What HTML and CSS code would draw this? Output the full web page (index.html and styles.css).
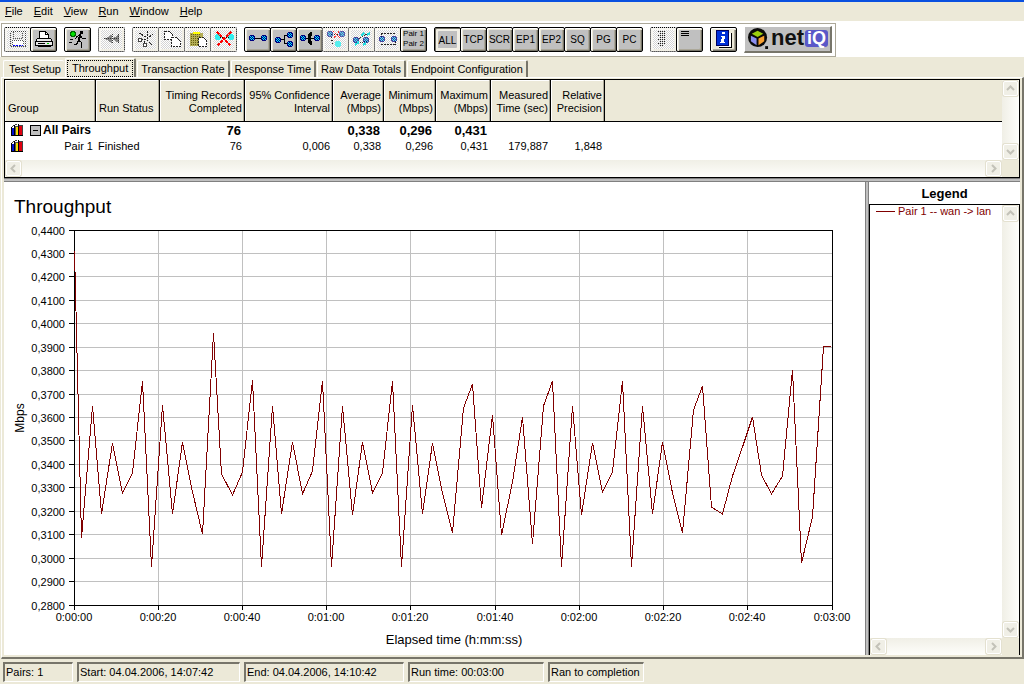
FILE: index.html
```html
<!DOCTYPE html>
<html lang="en">
<head>
<meta charset="utf-8">
<title>Throughput</title>
<link rel="stylesheet" href="styles.css">
</head>
<body>
<svg class="defs" aria-hidden="true">
  <symbol id="bars" viewBox="0 0 12 12"><path d="M0 3h1v9H0zM3 1h1v11H3zM7 0h1v12H7zM0 11h12v1H0z" fill="#000"/><path d="M1 4h2v7H1z" fill="#0010d0"/><path d="M4 2h3v9H4z" fill="#555"/><path d="M5 3h2v8H5z" fill="#f4e000"/><path d="M8 2h3v9H8z" fill="#e00010"/><path d="M1 3l2-2M4 1l2-1M8 1h3v1M11 2v9" stroke="#444" fill="none"/></symbol>
  <symbol id="node" viewBox="0 0 6 6"><path d="M1 0h4v1h1v4H5v1H1V5H0V1h1z" fill="#000080"/><path d="M1 1h1v1H1zM3 1h1v1H3zM2 2h1v1H2zM4 2h1v1H4zM1 3h1v1H1zM3 3h1v1H3zM2 4h1v1H2zM4 4h1v1H4z" fill="#00e8ff"/></symbol>
  <symbol id="up" viewBox="0 0 9 9"><path d="M1 6l3.500-3.500L8 6" fill="none" stroke="#c3c2b8" stroke-width="2"/></symbol>
  <symbol id="down" viewBox="0 0 9 9"><path d="M1 3l3.500 3.500L8 3" fill="none" stroke="#c3c2b8" stroke-width="2"/></symbol>
  <symbol id="left" viewBox="0 0 9 9"><path d="M6 1L2.500 4.500 6 8" fill="none" stroke="#c3c2b8" stroke-width="2"/></symbol>
  <symbol id="right" viewBox="0 0 9 9"><path d="M3 1l3.500 3.500L3 8" fill="none" stroke="#c3c2b8" stroke-width="2"/></symbol>
</svg>

<nav class="menu">
  <button><u>F</u>ile</button><button><u>E</u>dit</button><button><u>V</u>iew</button><button><u>R</u>un</button><button><u>W</u>indow</button><button><u>H</u>elp</button>
</nav>

<div class="toolbar-band">
  <div class="toolbar">
    <div class="group">
      <button class="tool off" aria-label="Save" disabled><svg viewBox="0 0 20 18"><path d="M2.500 1.500h15v15h-15z" fill="none" stroke="#444" stroke-dasharray="1 1"/><path d="M5.500 2v6.500h9V2" fill="none" stroke="#555" stroke-dasharray="1 1"/><path d="M5 10h10v5H5z" fill="#fff"/><path d="M4.500 15V10.500h11V15" fill="none" stroke="#555" stroke-dasharray="1 1"/><path d="M5 15.500h10" stroke="#00f" stroke-dasharray="2 1"/></svg></button>
      <button class="tool" aria-label="Print"><svg viewBox="0 0 20 18"><path d="M5.500 8.500V1.500h6l3 3v4" fill="#fff" stroke="#000"/><path d="M11.500 1.500v3h3" fill="none" stroke="#000"/><path d="M3.500 8.500h13l2 3v4h-17v-4z" fill="#e8e8e8" stroke="#000"/><path d="M2 11.500h16M4 13.500h7M4 16.500h13" stroke="#000"/><path d="M13 13h2v1h-2z" fill="#0c0"/></svg></button>
    </div>
    <div class="group">
      <button class="tool" aria-label="Run"><svg viewBox="0 0 20 18"><path d="M3 1h3v1h1v3H6v1H3V5H2V2h1z" fill="#00e000" stroke="#060"/><path d="M12 1h3v3h-3z" fill="#000"/><path d="M12.500 4.500L10.500 10.500" fill="none" stroke="#000" stroke-width="2"/><path d="M10.500 10.500L13.500 12.500V17.500M10.500 10.500L8.500 14.500H5.500M12 5.500L8.500 6.500 7.500 9.500M13 6.500L14.500 8.500H17.500" fill="none" stroke="#000"/><path d="M2 9.500h3M1 12.500h3" stroke="#000"/></svg></button>
    </div>
    <div class="group">
      <button class="tool off" aria-label="Stop" disabled><svg viewBox="0 0 20 18"><path d="M3 8.500l7-4v9zM10 8.500l7-4v9z" fill="#888"/><path d="M2 8.500h16M10 4v9M16 4v9" stroke="#333" stroke-dasharray="1 1"/></svg></button>
    </div>
    <div class="group">
      <button class="tool off" aria-label="Cut" disabled><svg viewBox="0 0 20 18"><path d="M11.500 1v7L3 3M11 9l6-5M10 9H5M11 10l5 5M9 11l-1 4" fill="none" stroke="#222" stroke-dasharray="2 1"/><circle cx="4" cy="10" r="2" fill="#fff" stroke="#444"/><circle cx="9" cy="15" r="2" fill="#fff" stroke="#444"/></svg></button>
      <button class="tool off" aria-label="Copy" disabled><svg viewBox="0 0 20 18"><path d="M2.500 1.500h5l3 3v5h-8z" fill="#fff" stroke="#222" stroke-dasharray="2 1"/><path d="M9.500 7.500h5l4 4v5h-9z" fill="#fff" stroke="#222" stroke-dasharray="2 1"/></svg></button>
      <button class="tool off" aria-label="Paste" disabled><svg viewBox="0 0 20 18"><path d="M2 3h13v13H2z" fill="#b3ad55"/><path d="M3 4h9M3 6h9M3 8h7M3 10h7M3 12h7M3 14h7" stroke="#665f10" stroke-dasharray="1 1"/><path d="M5 2h7v2H5z" fill="#ff0"/><path d="M10.500 7.500h5l3 3v6h-8z" fill="#fff" stroke="#222" stroke-dasharray="2 1"/></svg></button>
      <button class="tool off" aria-label="Delete" disabled><svg viewBox="0 0 20 18"><circle cx="4" cy="7" r="3" fill="#3ee"/><circle cx="17" cy="7" r="3" fill="#3ee"/><path d="M6 7.500h9" stroke="#000" stroke-dasharray="1 1"/><path d="M3 2l14 14M17 2L3 16" stroke="#f00" stroke-width="2" stroke-dasharray="3 1"/></svg></button>
    </div>
    <div class="group">
      <button class="tool" aria-label="Add pair"><svg viewBox="0 0 20 18"><path d="M6 8.500h8" stroke="#000"/><use href="#node" x="1" y="5" width="6" height="6"/><use href="#node" x="13" y="5" width="6" height="6"/></svg></button>
      <button class="tool" aria-label="Add multicast group"><svg viewBox="0 0 20 18"><path d="M6 9.500h4M14 5.500h-4v8h4" fill="none" stroke="#000"/><use href="#node" x="1" y="7" width="6" height="6"/><use href="#node" x="13" y="2" width="6" height="6"/><use href="#node" x="13" y="11" width="6" height="6"/></svg></button>
      <button class="tool" aria-label="Add VoIP pair"><svg viewBox="0 0 20 18"><path d="M6 8.500h8" stroke="#000"/><use href="#node" x="0" y="5" width="6" height="6"/><use href="#node" x="14" y="5" width="6" height="6"/><path d="M10 2h2v4h-1v5h1v4h-2l-2-2V4z" fill="#000"/></svg></button>
      <button class="tool off" aria-label="Replicate" disabled><svg viewBox="0 0 20 18"><path d="M5 4.500h10M5 7l2 7h6" fill="none" stroke="#222" stroke-dasharray="1 2"/><use href="#node" x="1" y="1" width="6" height="6" opacity=".6"/><use href="#node" x="13" y="1" width="6" height="6" opacity=".6"/><path d="M7 1l7 7M13 1L8 8" stroke="#f33" stroke-dasharray="2 1"/><circle cx="12" cy="14" r="3" fill="#5ee"/></svg></button>
      <button class="tool off" aria-label="Edit pair" disabled><svg viewBox="0 0 20 18"><path d="M5 10L17 3M6 13l10-2" stroke="#333" stroke-dasharray="1 1"/><use href="#node" x="1" y="7" width="6" height="6" opacity=".7"/><use href="#node" x="11" y="7" width="6" height="6" opacity=".7"/><path d="M3 15l4-3M9 6l3-3M11 15l3-2M15 5l3-2" stroke="#2dd" stroke-width="2"/></svg></button>
      <button class="tool off" aria-label="Swap endpoints" disabled><svg viewBox="0 0 20 18"><path d="M3 3.500h14M3 14.500h14M3 3v4M17 11v4" fill="none" stroke="#222" stroke-dasharray="2 1"/><use href="#node" x="1" y="6" width="6" height="6" opacity=".7"/><use href="#node" x="13" y="6" width="6" height="6" opacity=".7"/></svg></button>
      <button class="tool pairs">Pair 1<br>Pair 2</button>
    </div>
    <div class="group">
      <button class="tool pressed">ALL</button><button class="tool">TCP</button><button class="tool">SCR</button><button class="tool">EP1</button><button class="tool">EP2</button><button class="tool">SQ</button><button class="tool">PG</button><button class="tool">PC</button>
    </div>
    <div class="group">
      <button class="tool off" aria-label="Show details" disabled><svg viewBox="0 0 20 18"><path d="M4 1.500h8M6 3.500h6M4 5.500h8M6 7.500h6M4 9.500h8M6 11.500h6M4 13.500h8M6 15.500h4" stroke="#222" stroke-dasharray="1 1"/></svg></button>
      <button class="tool" aria-label="Show summary"><svg viewBox="0 0 20 18"><path d="M1 1.500h8M1 3.500h8M1 5.500h8" stroke="#000"/></svg></button>
    </div>
    <div class="group">
      <button class="tool light" aria-label="Information"><svg viewBox="0 0 20 18"><path d="M5 3h13v15H5z" fill="#000"/><path d="M5 3h12v14H5z" fill="#fff"/><path d="M2.500.5h12v15h-12z" fill="#0030d8" stroke="#000060"/><path d="M8 2h3v2H8zM7 6h3v1H7zM8 6h3l-1 6H7zM6 12h5v1H6z" fill="#fff"/></svg></button>
    </div>
    <a class="logo" href="#" aria-label="netiQ">
      <svg viewBox="0 0 22 22"><circle cx="10" cy="10" r="10" fill="#0a0a0a"/><path d="M10 3l6 3-6 3.500L4 6z" fill="#9ccf10"/><path d="M3 8l6 3v7l-6-4z" fill="#8b8ff0"/><path d="M17 8l-6 3v7l6-4z" fill="#f9a030"/><path d="M18 19h3v3h-3z" fill="#0a0a0a"/></svg>
      <span class="net">net</span><span class="iq">iQ</span>
    </a>
  </div>
</div>

<div class="tabs" role="tablist">
  <button class="tab" role="tab">Test Setup</button>
  <button class="tab current" role="tab" aria-selected="true"><span>Throughput</span></button>
  <button class="tab" role="tab">Transaction Rate</button>
  <button class="tab" role="tab">Response Time</button>
  <button class="tab" role="tab">Raw Data Totals</button>
  <button class="tab" role="tab">Endpoint Configuration</button>
</div>

<main class="panel">
  <section class="results">
    <div class="results-body">
      <table>
        <colgroup><col class="c-group"><col class="c-status"><col class="c-records"><col class="c-conf"><col class="c-avg"><col class="c-min"><col class="c-max"><col class="c-time"><col class="c-prec"><col></colgroup>
        <thead><tr><th class="l">Group</th><th class="l">Run Status</th><th>Timing Records<br>Completed</th><th>95% Confidence<br>Interval</th><th>Average<br>(Mbps)</th><th>Minimum<br>(Mbps)</th><th>Maximum<br>(Mbps)</th><th>Measured<br>Time (sec)</th><th>Relative<br>Precision</th><th class="rest"></th></tr></thead>
        <tbody>
          <tr class="total"><td class="l"><div class="cell"><svg class="bars"><use href="#bars"/></svg><button class="fold" aria-label="Collapse"></button><span>All Pairs</span></div></td><td></td><td>76</td><td></td><td>0,338</td><td>0,296</td><td>0,431</td><td></td><td></td><td></td></tr>
          <tr><td class="l"><div class="cell child"><svg class="bars"><use href="#bars"/></svg><span>Pair 1</span></div></td><td class="l">Finished</td><td>76</td><td>0,006</td><td>0,338</td><td>0,296</td><td>0,431</td><td>179,887</td><td>1,848</td><td></td></tr>
        </tbody>
      </table>
      <div class="vbar"><button aria-label="Scroll up"><svg><use href="#up"/></svg></button><button aria-label="Scroll down"><svg><use href="#down"/></svg></button></div>
    </div>
    <div class="hbar"><button aria-label="Scroll left"><svg><use href="#left"/></svg></button><button aria-label="Scroll right"><svg><use href="#right"/></svg></button></div>
  </section>
  <div class="split-h"></div>
  <div class="lower">
    <section class="chart">
      <svg viewBox="4 182 861 473" preserveAspectRatio="xMinYMin meet" role="img" aria-label="Throughput over elapsed time">
        <text class="title" x="14" y="213">Throughput</text>
        <path class="grid" d="M75 253.500h757M75 276.500h757M75 300.500h757M75 323.500h757M75 347.500h757M75 370.500h757M75 394.500h757M75 417.500h757M75 440.500h757M75 464.500h757M75 487.500h757M75 511.500h757M75 534.500h757M75 558.500h757M75 581.500h757"/>
        <path class="grid" d="M158.500 231v374M242.500 231v374M326.500 231v374M410.500 231v374M495.500 231v374M579.500 231v374M663.500 231v374M747.500 231v374"/>
        <path class="axis" d="M74.500 230.500h758v375h-758z"/>
        <path class="axis" d="M69 230.500h5M69 253.500h5M69 276.500h5M69 300.500h5M69 323.500h5M69 347.500h5M69 370.500h5M69 394.500h5M69 417.500h5M69 440.500h5M69 464.500h5M69 487.500h5M69 511.500h5M69 534.500h5M69 558.500h5M69 581.500h5M69 605.500h5"/>
        <path class="axis" d="M74.500 606v4M158.500 606v4M242.500 606v4M326.500 606v4M410.500 606v4M495.500 606v4M579.500 606v4M663.500 606v4M747.500 606v4M832.500 606v4"/>
        <g class="ylab">
          <text x="65" y="235">0,4400</text><text x="65" y="258">0,4300</text><text x="65" y="281">0,4200</text><text x="65" y="305">0,4100</text><text x="65" y="328">0,4000</text><text x="65" y="352">0,3900</text><text x="65" y="375">0,3800</text><text x="65" y="399">0,3700</text><text x="65" y="422">0,3600</text><text x="65" y="445">0,3500</text><text x="65" y="469">0,3400</text><text x="65" y="492">0,3300</text><text x="65" y="516">0,3200</text><text x="65" y="539">0,3100</text><text x="65" y="563">0,3000</text><text x="65" y="586">0,2900</text><text x="65" y="610">0,2800</text>
        </g>
        <g class="xlab">
          <text x="74" y="621">0:00:00</text><text x="158" y="621">0:00:20</text><text x="242" y="621">0:00:40</text><text x="326" y="621">0:01:00</text><text x="410" y="621">0:01:20</text><text x="495" y="621">0:01:40</text><text x="579" y="621">0:02:00</text><text x="663" y="621">0:02:20</text><text x="747" y="621">0:02:40</text><text x="832" y="621">0:03:00</text>
          <text class="ytitle" transform="translate(24 418) rotate(-90)">Mbps</text>
        </g>
        <text class="xtitle" x="454" y="644">Elapsed time (h:mm:ss)</text>
        <polyline class="series" points="74.5,251 75.500,290 81.5,538 92.5,406 101.5,514 112.5,443 122.5,493 132.5,473 142.5,381 151.5,567 162.5,405 172.5,514 182.5,442 192.5,492 202.5,534 213.5,333 221.5,474 232.5,495 242.5,472 252.5,380 261.5,567 272.5,406 281.5,514 292.5,442 302.5,494 312.5,471 322.5,381 331.5,567 342.5,406 352.5,515 362.5,442 372.5,493 382.5,473 392.5,381 401.5,567 412.5,405 422.5,514 432.5,443 442.5,493 452.5,533 463.5,408 472.5,384 481.5,508 492.5,415 501.5,535 512.5,482 522.5,417 532.5,544 543.5,406 552.5,381 561.5,567 572.5,406 581.5,515 592.5,443 602.5,492 612.5,472 622.5,381 631.5,567 642.5,406 652.5,514 662.5,442 672.5,493 682.5,533 693.5,410 702.5,386 711.5,507 722.5,514 732.5,476 742.5,447 752.5,417 761.5,475 771.5,494 782.5,476 792.5,370 801.5,563 812.5,517 823.5,346.5 831,346.5"/>
        <path class="axis" d="M74.500 272v60"/>
      </svg>
    </section>
    <div class="split-v"></div>
    <aside class="legend">
      <h2>Legend</h2>
      <div class="legend-box">
        <div class="legend-body">
          <div class="legend-list"><div class="key"><i></i>Pair 1 -- wan -&gt; lan</div></div>
          <div class="vbar"><button aria-label="Scroll up"><svg><use href="#up"/></svg></button><button aria-label="Scroll down"><svg><use href="#down"/></svg></button></div>
        </div>
        <div class="hbar"><button aria-label="Scroll left"><svg><use href="#left"/></svg></button><button aria-label="Scroll right"><svg><use href="#right"/></svg></button></div>
      </div>
    </aside>
  </div>
</main>

<footer class="status">
  <span class="s-pairs">Pairs: 1</span><span class="s-start">Start: 04.04.2006, 14:07:42</span><span class="s-end">End: 04.04.2006, 14:10:42</span><span class="s-run">Run time: 00:03:00</span><span class="s-done">Ran to completion</span>
</footer>
</body>
</html>
```

FILE: styles.css
```css
* { box-sizing: border-box; }
body {
  margin: 0;
  min-height: 100vh;
  display: flex;
  flex-direction: column;
  background: #ece9d8;
  color: #000;
  font: 11px/13px "Liberation Sans", Arial, sans-serif;
  border-top: 2px solid #0a50e0;
}
button {
  font: inherit;
  color: inherit;
  background: none;
  border: 0;
  padding: 0;
  margin: 0;
}
.defs { display: none; }

.menu { display: flex; gap: 11px; padding: 3px 5px; }

.toolbar-band { background: #fff; padding: 1px 0 0 1px; border-top: 1px solid #fff; }
.toolbar {
  display: inline-flex;
  vertical-align: top;
  align-items: center;
  gap: 7px;
  height: 34px;
  padding: 0 3px 2px 2px;
  border: 1px solid #aca899;
}
.group { display: flex; }
.tool {
  width: 27px;
  height: 25px;
  display: flex;
  align-items: center;
  justify-content: center;
  white-space: nowrap;
  font-size: 10px;
  background: #c0c0c0;
  border: 1px solid #000;
  border-radius: 2px;
  box-shadow: inset 1px 1px #fff, inset 2px 2px #ece9d8, inset -1px -1px #77756a, inset -2px -2px #aca899;
}
.tool + .tool { margin-left: -1px; }
.tool svg { width: 20px; height: 18px; flex: none; shape-rendering: crispEdges; }
.tool.off {
  border-style: dotted;
  background: repeating-conic-gradient(#d4d4d4 0 25%, #fff 0 50%) 0 0 / 2px 2px;
  box-shadow: inset 2px 2px #f8f7f2, inset -2px -2px #f1efe5;
}
.tool.pressed { box-shadow: inset 1px 1px #77756a, inset 3px 3px #f1efe5, inset -3px -3px #f1efe5; padding-top: 2px; }
.tool.light { background: #ece9d8; }
.tool.pairs { font-size: 8px; line-height: 10px; }
.logo {
  width: 88px;
  height: 27px;
  display: flex;
  align-items: center;
  padding-left: 3px;
  background: #c0c0c0;
  border: 1px solid #fff;
  border-right: 2px solid #77756a;
  border-bottom: 2px solid #77756a;
  color: #111;
  text-decoration: none;
}
.logo svg { width: 21px; height: 21px; flex: none; }
.net { font-weight: bold; font-size: 22px; line-height: 20px; margin: 0 1px 2px 2px; }
.iq {
  background: #5a58c8;
  color: #fff;
  font-weight: bold;
  font-size: 18px;
  line-height: 17px;
  border-radius: 3px;
  width: 23px;
  text-align: center;
}

.tabs { display: flex; align-items: flex-end; gap: 1px; padding: 1px 3px 0; height: 20px; }
.tab {
  height: 17px;
  padding: 1px 3px 0;
  border-left: 1px solid #fff;
  border-top: 1px solid #fff;
  border-right: 2px solid #77756a;
  border-radius: 2px 2px 0 0;
  white-space: nowrap;
}
.tab:first-child { padding-left: 5px; border-right: 0; }
.tab.current { height: 19px; padding: 0 1px; }
.tab.current span { display: block; height: 17px; padding: 1px 4px 0; border: 1px dotted #000; }

.panel {
  flex: 1;
  display: flex;
  flex-direction: column;
  margin-left: 1px;
  padding: 1px 2px 2px;
  border-top: 1px solid #fff;
  border-left: 1px solid #fff;
  border-right: 2px solid #77756a;
  border-bottom: 2px solid #77756a;
}
.results { border: 1px solid #000; background: #fff; }
.results-body { display: flex; }
table { flex: 1; width: 0; border-collapse: separate; border-spacing: 0; table-layout: fixed; margin-bottom: 6px; }
.c-group { width: 91px; } .c-status { width: 64px; } .c-records { width: 85px; }
.c-conf { width: 88px; } .c-avg { width: 51px; } .c-min { width: 52px; }
.c-max { width: 55px; } .c-time { width: 60px; } .c-prec { width: 54px; }
th {
  height: 42px;
  padding: 0 2px 6px 0;
  vertical-align: bottom;
  text-align: right;
  font-weight: normal;
  white-space: nowrap;
  background: #ece9d8;
  border-right: 1px solid #000;
  border-bottom: 1px solid #000;
  box-shadow: inset -1px 0 #aca899, inset 1px 1px #fff;
}
th.l { text-align: left; padding-left: 3px; }
th.rest { border-right: 0; box-shadow: none; }
td { height: 16px; padding: 0 3px 0 2px; text-align: right; white-space: nowrap; }
td.l { text-align: left; }
.total { font-weight: bold; font-size: 13px; }
.total .cell { font-size: 12px; }
.total td { padding-right: 4px; }
.cell { display: flex; align-items: center; padding-left: 4px; }
.bars { width: 12px; height: 12px; shape-rendering: crispEdges; }
.fold {
  width: 11px;
  height: 11px;
  margin: 0 2px 0 7px;
  border: 1px solid #000;
  background: linear-gradient(#000, #000) center / 5px 1px no-repeat, #c0c0c0;
}
.child { justify-content: space-between; }

.vbar {
  width: 17px;
  display: flex;
  flex-direction: column;
  justify-content: space-between;
  background: linear-gradient(90deg, #f0efe6, #fefefb);
}
.hbar {
  height: 17px;
  margin-right: 17px;
  display: flex;
  justify-content: space-between;
  background: linear-gradient(#f0efe6, #fefefb);
  box-shadow: 17px 0 #ece9d8;
}
.vbar button, .hbar button {
  width: 15px;
  height: 15px;
  margin: 1px;
  display: grid;
  place-items: center;
  background: #f0efe6;
  border: 1px solid #fff;
  border-radius: 2px;
  box-shadow: 0 0 0 1px #e4e1d0;
}
.vbar svg, .hbar svg { width: 9px; height: 9px; }

.split-h { height: 4px; background: #c0c0c0; border: 1px solid #808080; border-width: 1px 0; }
.lower { flex: 1; display: flex; background: #fff; }
.chart { flex: 1; min-width: 0; }
.chart svg { display: block; width: 100%; height: auto; }
.grid { fill: none; stroke: #c0c0c0; shape-rendering: crispEdges; }
.axis { fill: none; stroke: #000; shape-rendering: crispEdges; }
.series { fill: none; stroke: #800000; shape-rendering: crispEdges; }
.title { font-size: 19px; }
.ylab { text-anchor: end; }
.xlab, .xtitle { text-anchor: middle; }
.ytitle { font-size: 12px; }
.xtitle { font-size: 13px; }
.split-v { width: 4px; background: #c0c0c0; border: 1px solid #808080; border-width: 0 1px; }

.legend { width: 151px; display: flex; flex-direction: column; }
.legend h2 { margin: 0; padding: 4px 0 3px; font-size: 13px; line-height: 15px; text-align: center; }
.legend-box { flex: 1; display: flex; flex-direction: column; border: 1px solid #000; border-bottom: 0; }
.legend-body { flex: 1; display: flex; }
.legend-list { flex: 1; }
.key { display: flex; align-items: center; gap: 3px; padding-left: 6px; white-space: nowrap; color: #800000; }
.key i { width: 19px; height: 1px; background: #800000; }

.status { display: flex; gap: 4px; padding: 3px 3px 2px; }
.status span {
  height: 20px;
  padding: 2px 1px 0;
  white-space: nowrap;
  border: 2px solid #77756a;
  border-right: 1px solid #fff;
  border-bottom: 1px solid #fff;
}
.s-pairs { width: 70px; } .s-start { width: 163px; } .s-end { width: 160px; } .s-run { width: 136px; } .s-done { width: 96px; }
```
